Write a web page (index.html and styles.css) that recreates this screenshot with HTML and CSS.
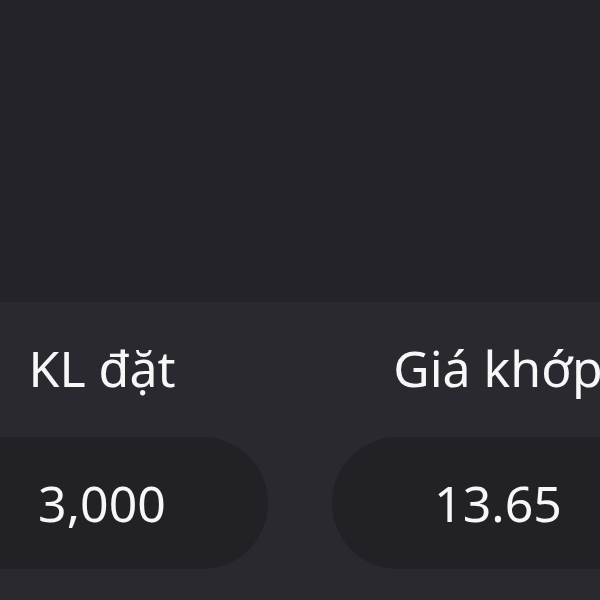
FILE: index.html
```html
<!DOCTYPE html>
<html lang="vi">
<head>
    <meta charset="UTF-8">
    <meta name="viewport" content="width=device-width, initial-scale=1.0">
    <title>Lệnh khớp</title>
    <link rel="stylesheet" href="styles.css">
</head>
<body>
    <!-- Empty chart area -->
    <div class="top-area"></div>

    <!-- Order details -->
    <div class="order-panel">
        <div class="order-grid">
            <div class="order-col">
                <div class="order-label">KL đặt</div>
                <div class="order-value">3,000</div>
            </div>
            <div class="order-col">
                <div class="order-label">Giá khớp</div>
                <div class="order-value">13.65</div>
            </div>
        </div>
    </div>
</body>
</html>
```

FILE: styles.css
```css
/* Page */
body {
    margin: 0;
    background-color: #2a2930;
    font-family: "Noto Sans", sans-serif;
    color: #f7f7f8;
    overflow: hidden;
}

/* Top dark area */
.top-area {
    height: 302px;
    background-color: #242329;
}

/* Panel with the order values */
.order-panel {
    padding-top: 32px;
}

.order-grid {
    display: grid;
    grid-template-columns: 332px 332px;
    gap: 64px;
    margin-left: -64px;
}

.order-col {
    display: flex;
    flex-direction: column;
    align-items: center;
}

.order-label {
    font-size: 50px;
    line-height: 68px;
    white-space: nowrap;
}

.order-value {
    margin-top: 35px;
    width: 100%;
    height: 132px;
    border-radius: 66px;
    background-color: #222126;
    display: flex;
    align-items: center;
    justify-content: center;
    font-size: 50px;
}
```
